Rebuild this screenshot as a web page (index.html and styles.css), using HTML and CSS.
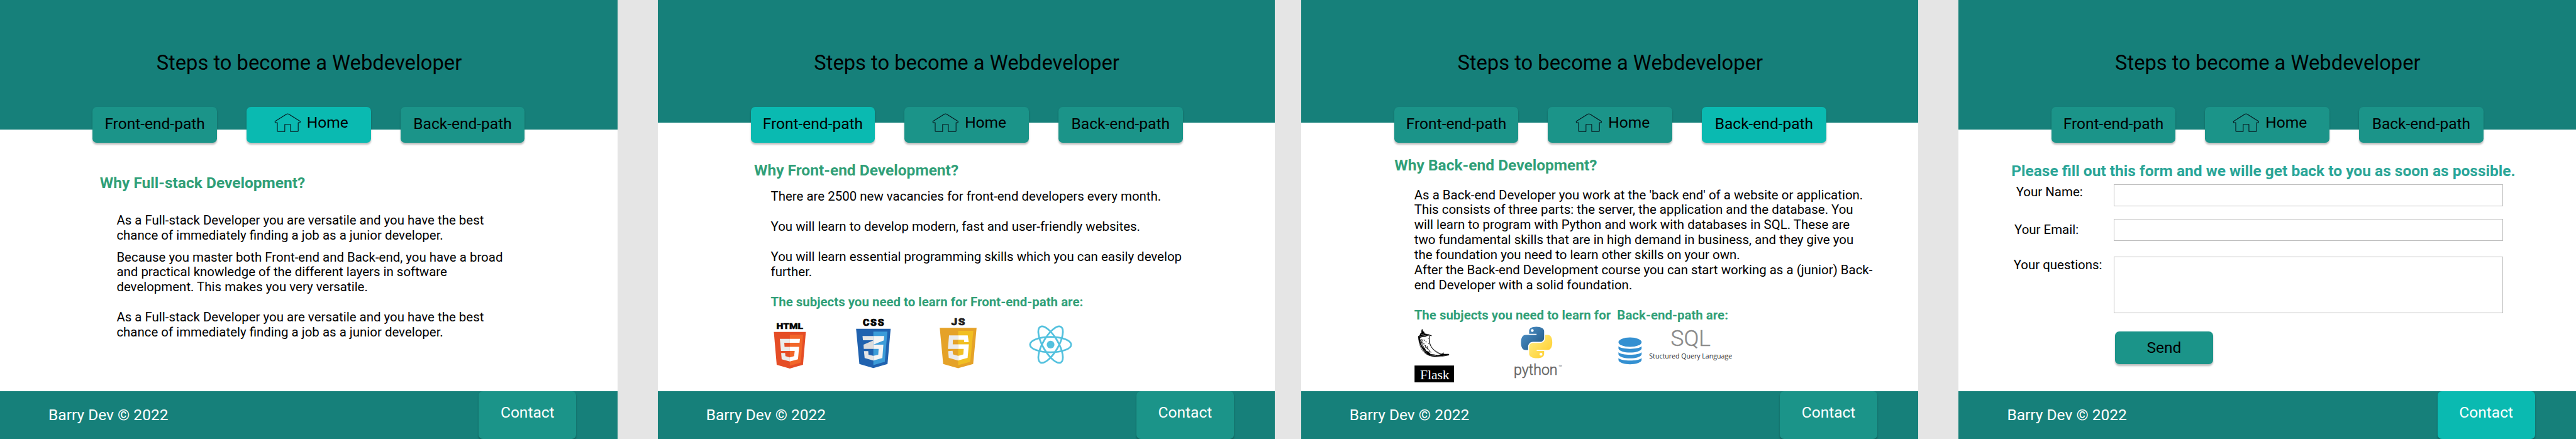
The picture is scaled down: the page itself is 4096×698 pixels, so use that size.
FILE: index.html
```html
<!DOCTYPE html>
<html lang="en">
<head>
<meta charset="utf-8">
<title>Steps to become a Webdeveloper</title>
<link rel="stylesheet" href="styles.css">
</head>
<body>
<svg class="defs" aria-hidden="true">
  <symbol id="house" viewBox="234 132 188 134">
    <path d="M256 198H243Q236 192 243 187L320 139Q328 134 336 139L413 187Q420 192 413 198H402V256Q402 260 397 260H348V210H308V260H261Q256 260 256 256Z" fill="none" stroke="#07181f" stroke-width="5" stroke-linejoin="round"/>
  </symbol>
</svg>

<div class="board">

  <section class="page page-home">
    <header class="header header-tall"><h1 class="title">Steps to become a Webdeveloper</h1></header>
    <nav class="nav">
      <a class="tab">Front-end-path</a>
      <a class="tab tab-home active"><svg class="house"><use href="#house"/></svg><span>Home</span></a>
      <a class="tab">Back-end-path</a>
    </nav>
    <main class="content">
      <h2 class="heading">Why Full-stack Development?</h2>
      <div class="copy">
        <p class="first">As a Full-stack Developer you are versatile and you have the best<br>chance of immediately finding a job as a junior developer.</p>
        <p>Because you master both Front-end and Back-end, you have a broad<br>and practical knowledge of the different layers in software<br>development. This makes you very versatile.</p>
        <p class="spaced">As a Full-stack Developer you are versatile and you have the best<br>chance of immediately finding a job as a junior developer.</p>
      </div>
    </main>
    <footer class="footer"><span class="copyright">Barry Dev © 2022</span><a class="contact">Contact</a></footer>
  </section>

  <section class="page page-front">
    <header class="header"><h1 class="title">Steps to become a Webdeveloper</h1></header>
    <nav class="nav">
      <a class="tab active">Front-end-path</a>
      <a class="tab tab-home"><svg class="house"><use href="#house"/></svg><span>Home</span></a>
      <a class="tab">Back-end-path</a>
    </nav>
    <main class="content">
      <h2 class="heading">Why Front-end Development?</h2>
      <div class="copy">
        <p>There are 2500 new vacancies for front-end developers every month.</p>
        <p class="spaced">You will learn to develop modern, fast and user-friendly websites.</p>
        <p class="spaced">You will learn essential programming skills which you can easily develop<br>further.</p>
        <h3 class="subheading">The subjects you need to learn for Front-end-path are:</h3>
      </div>
      <div class="logos">
        <svg class="logo-html" viewBox="72 106 228 321">
          <text x="92" y="152" font-family="Roboto" font-weight="900" font-size="60" stroke="#000" stroke-width="2" textLength="187" lengthAdjust="spacingAndGlyphs">HTML</text>
          <path fill="#e54d26" d="M74 171H298L278 401L186 427L94 401Z"/>
          <path fill="#f26629" d="M186 191H279L262 386L186 407Z"/>
          <path fill="#ebebeb" d="M186 219H116L124 304H186V276H149L147 247H186ZM186 378L129 362L125 318H153L155 340L186 349Z"/>
          <path fill="#fff" d="M186 219H257L254 247H186ZM186 276H251L243 362L186 378V349L216 340L220 304H186Z"/>
        </svg>
        <svg class="logo-css" viewBox="650 82 246 345">
          <text x="698" y="131" font-family="Roboto" font-weight="900" font-size="64" stroke="#000" stroke-width="3" letter-spacing="7" textLength="156" lengthAdjust="spacingAndGlyphs">CSS</text>
          <path fill="#2062af" d="M651 151H893L871 398L772 426L674 398Z"/>
          <path fill="#3c9cd9" d="M772 171H870L852 382L772 405Z"/>
          <path fill="#e6e6e6" d="M696 202H772V232H699ZM772 374L711 356L706 308H736L738 333L772 341Z"/>
          <path fill="#dcdcdc" d="M772 233L703 263L705 292H772Z"/>
          <path fill="#f5f5f5" d="M772 202H848L845 233L772 262H842L835 356L772 374V341L806 333L809 292H772Z"/>
        </svg>
        <svg class="logo-js" viewBox="98 71 260 355">
          <text x="179" y="122" font-family="Roboto" font-weight="900" font-size="66" fill="#231f20" stroke="#231f20" stroke-width="3" letter-spacing="7" textLength="105" lengthAdjust="spacingAndGlyphs">JS</text>
          <path fill="#e5a228" d="M99 143H357L333 396L228 425L123 396Z"/>
          <path fill="#f1bf22" d="M228 163H334L313 380L228 404Z"/>
          <path fill="#ebebeb" d="M228 195H164L156 290H228V258H190L191 226H228ZM228 371L162 353L158 305L189 303L192 329L228 339Z"/>
          <path fill="#fff" d="M228 195H295L302 243H270L269 226H228ZM228 258H303L294 353L228 371V339L264 329L267 290H228Z"/>
        </svg>
        <svg class="logo-react" viewBox="720 128 304 272">
          <g fill="none" stroke="#53c1de" stroke-width="12">
            <ellipse cx="872" cy="264" rx="144" ry="54"/>
            <ellipse cx="872" cy="264" rx="144" ry="54" transform="rotate(60 872 264)"/>
            <ellipse cx="872" cy="264" rx="144" ry="54" transform="rotate(120 872 264)"/>
          </g>
          <circle cx="872" cy="264" r="27" fill="#53c1de"/>
        </svg>
      </div>
    </main>
    <footer class="footer"><span class="copyright">Barry Dev © 2022</span><a class="contact">Contact</a></footer>
  </section>

  <section class="page page-back">
    <header class="header"><h1 class="title">Steps to become a Webdeveloper</h1></header>
    <nav class="nav">
      <a class="tab">Front-end-path</a>
      <a class="tab tab-home"><svg class="house"><use href="#house"/></svg><span>Home</span></a>
      <a class="tab active">Back-end-path</a>
    </nav>
    <main class="content">
      <h2 class="heading">Why Back-end Development?</h2>
      <div class="copy">
        <p>As a Back-end Developer you work at the 'back end' of a website or application.<br>This consists of three parts: the server, the application and the database. You<br>will learn to program with Python and work with databases in SQL. These are<br>two fundamental skills that are in high demand in business, and they give you<br>the foundation you need to learn other skills on your own.<br>After the Back-end Development course you can start working as a (junior) Back-<br>end Developer with a solid foundation.</p>
        <h3 class="subheading">The subjects you need to learn for&nbsp; Back-end-path are:</h3>
      </div>
      <div class="logos">
        <svg class="logo-flask" viewBox="86 86 278 374">
          <path fill="#fff" stroke="#000" stroke-width="3" d="M113 140C122 215 140 276 240 281C275 281 305 274 328 267L326 262L268 264C225 245 195 215 190 170V132L150 128Z"/>
          <path d="M136 92Q141 84 146 92L144 101L154 106L158 118L186 123L209 133L204 137L184 129L166 140L140 143L114 152L112 138L123 130L126 119L135 114V103Z"/>
          <path d="M114 150L126 151L134 190L148 214L160 222L168 238L186 246L200 262L222 264L250 270L276 262L291 250L290 261L328 263V271L290 274L250 279C205 282 172 270 152 242C132 212 120 190 114 150Z"/>
          <path fill="none" stroke="#000" stroke-width="4" d="M190 135C188 165 192 195 205 212C222 236 246 252 278 262M136 156L146 172L142 184L156 190M152 160L162 172M166 180L172 174M150 196L166 204L162 214L178 220M174 206L182 224M184 148V154M186 184V190M172 222L192 236L190 244L204 250M133 164L140 196L154 216"/>
          <path fill="none" stroke="#fff" stroke-width="2" d="M122 139L150 134L182 126M128 170L142 210M150 232L172 256M196 268L236 274M132 124L152 122"/>
          <rect x="87" y="342" width="276" height="117"/>
          <text x="126" y="439" font-family="Liberation Serif" font-size="96" fill="#fff" textLength="205" lengthAdjust="spacing">Flask</text>
        </svg>
        <svg class="logo-python" viewBox="788 70 334 370">
          <defs>
            <linearGradient id="pyBlue" x1="0" y1="0" x2="1" y2="1"><stop offset=".1" stop-color="#4a8fc6"/><stop offset=".75" stop-color="#2c6493"/></linearGradient>
            <linearGradient id="pyYellow" x1="1" y1="1" x2="0" y2="0"><stop offset=".2" stop-color="#ffe873"/><stop offset=".85" stop-color="#ffd033"/></linearGradient>
          </defs>
          <path fill="url(#pyBlue)" fill-rule="evenodd" d="M942 72C905 72 891 85 891 103V122H943V129H868C845 129 834 150 834 183C834 216 846 235 865 235H884V212C884 193 899 178 918 178H968C984 178 996 166 996 151V103C996 85 975 72 942 72ZM903 99A10 10 0 1 0 923 99A10 10 0 1 0 903 99Z"/>
          <path fill="url(#pyYellow)" fill-rule="evenodd" transform="rotate(180 943.5 182)" d="M942 72C905 72 891 85 891 103V122H943V129H868C845 129 834 150 834 183C834 216 846 235 865 235H884V212C884 193 899 178 918 178H968C984 178 996 166 996 151V103C996 85 975 72 942 72ZM903 99A10 10 0 1 0 923 99A10 10 0 1 0 903 99Z"/>
          <text x="784" y="410" font-family="Roboto" font-weight="300" font-size="104" fill="#646464" stroke="#646464" stroke-width="2.5" textLength="306" lengthAdjust="spacingAndGlyphs">python</text>
          <text x="1097" y="350" font-family="Roboto" font-size="15" fill="#646464" textLength="23" lengthAdjust="spacingAndGlyphs">TM</text>
        </svg>
        <svg class="logo-sql" viewBox="224 92 800 245">
          <g fill="#3490d1">
            <ellipse cx="307" cy="180" rx="81" ry="33"/>
            <path id="disk" d="M226 209C245 233 369 233 388 209V225C378 262 236 262 226 225Z"/>
            <use href="#disk" y="41"/>
            <use href="#disk" y="82"/>
          </g>
          <text x="592" y="205" font-family="Roboto" font-weight="300" font-size="152" fill="#898989" stroke="#898989" stroke-width="2" textLength="278" lengthAdjust="spacingAndGlyphs">SQL</text>
          <text x="441" y="293" font-family="Open Sans" font-size="48" fill="#2b2b2b" textLength="580" lengthAdjust="spacingAndGlyphs">Stuctured Query Language</text>
        </svg>
      </div>
    </main>
    <footer class="footer"><span class="copyright">Barry Dev © 2022</span><a class="contact">Contact</a></footer>
  </section>

  <section class="page page-contact">
    <header class="header header-tall"><h1 class="title">Steps to become a Webdeveloper</h1></header>
    <nav class="nav">
      <a class="tab">Front-end-path</a>
      <a class="tab tab-home"><svg class="house"><use href="#house"/></svg><span>Home</span></a>
      <a class="tab">Back-end-path</a>
    </nav>
    <main class="content">
      <h2 class="heading">Please fill out this form and we wille get back to you as soon as possible.</h2>
      <form class="form">
        <div class="row row-name"><label class="label" for="name">Your Name:</label><input class="field" id="name"></div>
        <div class="row row-email"><label class="label" for="email">Your Email:</label><input class="field" id="email"></div>
        <div class="row row-questions"><label class="label" for="questions">Your questions:</label><textarea class="field field-large" id="questions"></textarea></div>
        <button class="send" type="button">Send</button>
      </form>
    </main>
    <footer class="footer"><span class="copyright">Barry Dev © 2022</span><a class="contact active">Contact</a></footer>
  </section>

</div>
</body>
</html>
```
FILE: styles.css
```css
* { box-sizing: border-box; margin: 0; padding: 0; }

/* 1rem is a tenth of the width unit: the four pages and their gaps span 600.9rem */
html { font-size: calc(4096px / 600.9); overflow: hidden; }
body { background: #e5e5e5; font-family: Roboto, sans-serif; color: #000; overflow: hidden; height: 698px; }

.defs { display: none; }
.board { display: flex; width: 600.9rem; height: 102.4rem; }
.page { display: flex; flex-direction: column; flex: none; width: 144rem; height: 102.4rem; background: #fff; }
.page-front { margin-left: 9.4rem; }
.page-back { margin-left: 6.1rem; }
.page-contact { margin-left: 9.4rem; }

/* Header */
.header { flex: none; height: 28.6rem; padding-top: 11.9rem; background: #16807a; text-align: center; }
.header-tall { height: 30.2rem; }
.title { font-size: 4.8rem; line-height: 5.6rem; font-weight: 400; padding-left: .2rem; }

/* Tabs straddle the bottom edge of the header */
.nav { display: flex; flex: none; gap: 6.9rem; height: 8.4rem; margin-top: -3.7rem; padding-left: 21.7rem; }
.header-tall + .nav { margin-top: -5.3rem; padding-left: 21.6rem; }
.tab { display: flex; justify-content: center; width: 29rem; height: 8.4rem; padding-top: 2rem; border-radius: 1rem; background: #1b9489; box-shadow: 0 .4rem .4rem rgba(0, 0, 0, .25); font-size: 3.6rem; line-height: 4.2rem; }
.tab-home { justify-content: flex-start; gap: 1.4rem; padding: 1.6rem 0 0 6.4rem; }
.house { width: 6.27rem; height: 4.47rem; margin-top: -.1rem; }
.active { background: #0abab1; }

/* Content */
.content { flex: 1; min-height: 0; white-space: nowrap; }
.heading { font-size: 3.6rem; line-height: 4.2rem; font-weight: 700; color: #309f78; }
.copy { font-size: 3rem; line-height: 3.51rem; }
.spaced { margin-top: 3.51rem; }
.subheading { margin-top: 3.51rem; font-size: 3rem; line-height: 3.51rem; font-weight: 700; color: #309f78; }
.logos { display: flex; align-items: flex-start; }
.logos svg { flex: none; display: block; overflow: visible; }

.page-home .content { padding: 7.4rem 0 0 23.3rem; }
.page-home .copy { padding: 4.8rem 0 0 3.9rem; }
.page-home .first { margin-bottom: 1.6rem; }

.page-front .content { padding: 4.45rem 0 0 22.5rem; }
.page-front .copy { padding: 2.25rem 0 0 3.9rem; }
.page-front .logos { padding: 1.75rem 0 0 4.5rem; }
.logo-html { width: 7.6rem; height: 10.7rem; margin-top: 1.2rem; }
.logo-css { width: 8.2rem; height: 11.5rem; margin: .4rem 0 0 11.65rem; }
.logo-js { width: 8.67rem; height: 11.83rem; margin-left: 11.4rem; }
.logo-react { width: 10.13rem; height: 9.07rem; margin: 1.9rem 0 0 12.06rem; }

.page-back .content { padding: 3.3rem 0 0 21.8rem; }
.page-back .copy { padding: 3rem 0 0 4.6rem; }
.page-back .logos { padding: .8rem 0 0 4.57rem; }
.logo-flask { width: 9.27rem; height: 12.47rem; margin-top: .5rem; }
.logo-python { width: 11.13rem; height: 12.33rem; margin-left: 14.13rem; }
.logo-sql { width: 26.67rem; height: 8.17rem; margin: .7rem 0 0 13.07rem; }

/* Contact form */
.page-contact .content { padding-top: 4.5rem; }
.page-contact .heading { padding-left: 12.3rem; color: #2aa597; }
.form { display: flex; flex-direction: column; padding-top: 1rem; font-size: 3rem; line-height: 3.5rem; }
.row { display: flex; align-items: flex-start; }
.label { width: 36.2rem; }
.row-name .label { padding: .2rem 0 0 13.4rem; }
.row-email { margin-top: 3rem; }
.row-email .label { padding: .8rem 0 0 13rem; }
.row-questions { margin-top: 3.7rem; }
.row-questions .label { padding: .2rem 0 0 12.8rem; }
.field { display: block; width: 90.8rem; height: 5.1rem; border: .2rem solid #bdbdbd; border-radius: 0; background: #fff; resize: none; outline: none; }
.field-large { height: 13.1rem; }
.send { width: 23rem; height: 7.7rem; margin: 4.3rem 0 0 36.4rem; border: 0; border-radius: 1rem; background: #1b9489; box-shadow: 0 .4rem .4rem rgba(0, 0, 0, .25); font: 400 3.6rem/4.2rem Roboto, sans-serif; color: #000; }

/* Footer */
.footer { display: flex; justify-content: space-between; flex: none; height: 11.1rem; padding: 0 9.6rem 0 11.3rem; background: #16807a; color: #fff; font-size: 3.6rem; line-height: 4.2rem; }
.copyright { padding-top: 3.4rem; }
.contact { width: 22.7rem; height: 11.1rem; padding-top: 2.95rem; border-radius: 1rem; background: #1b9489; box-shadow: 0 .4rem .4rem rgba(0, 0, 0, .25); text-align: center; }
.contact.active { background: #0abab1; }
```
